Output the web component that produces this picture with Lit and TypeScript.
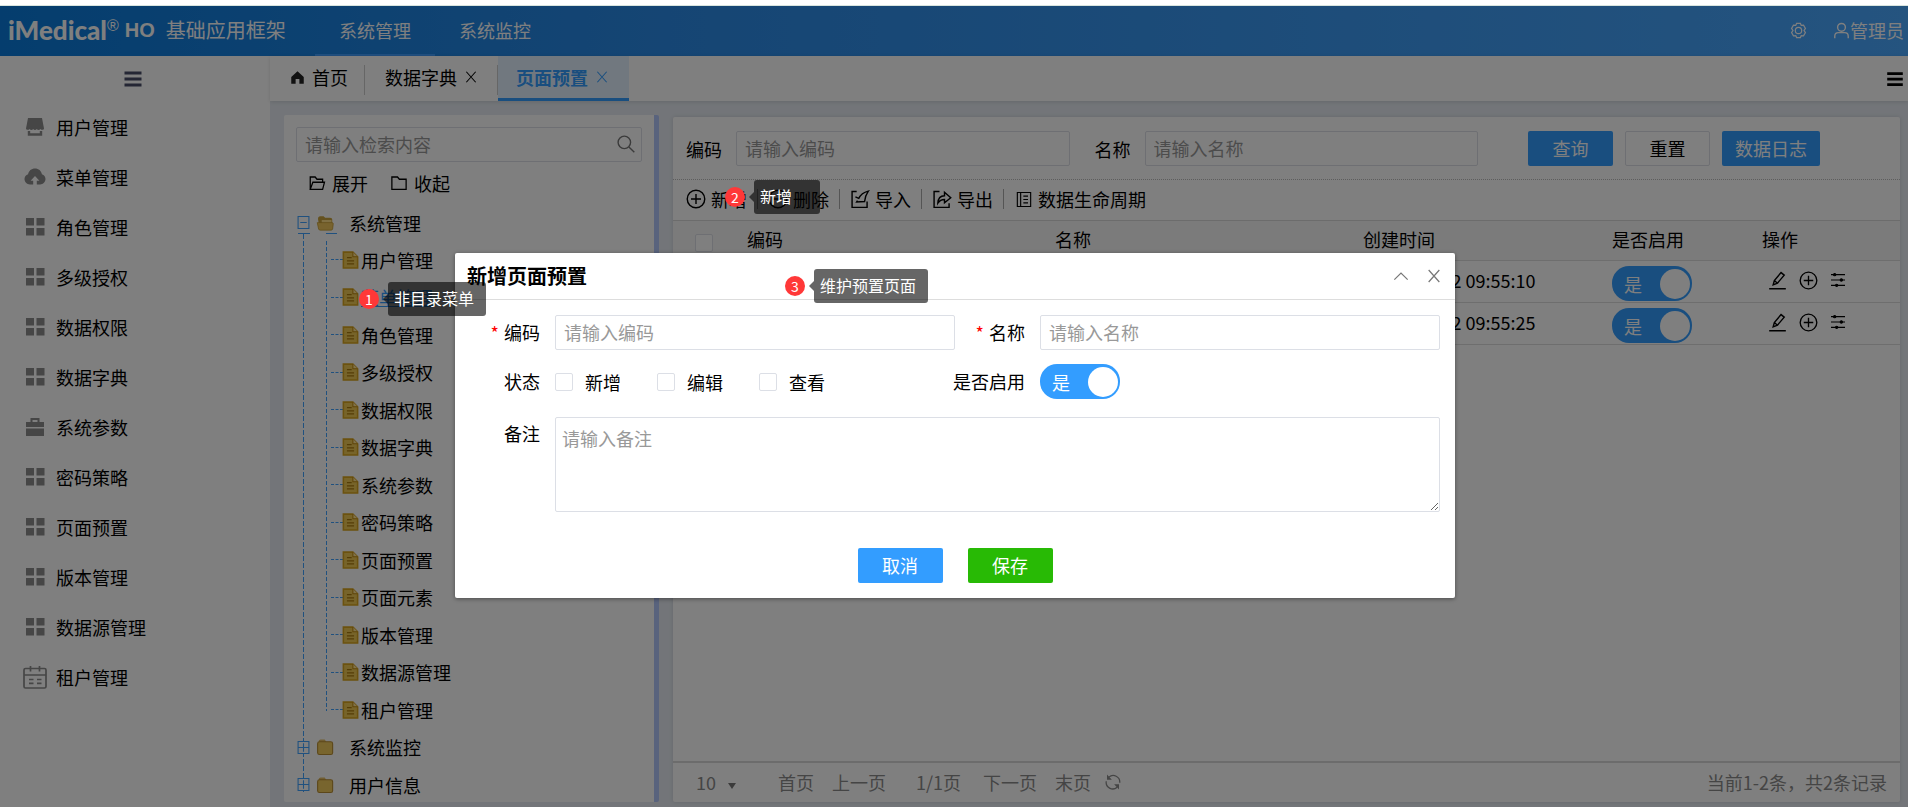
import { LitElement, html, svg, css, SVGTemplateResult } from "lit";
import { customElement } from "lit/decorators.js";
import { classMap } from "lit/directives/class-map.js";

const glyphs: Record<string, SVGTemplateResult> = {
  shop: svg`<path fill="currentColor" d="M5 3h14l2 10.500c0 1.500-2.600 1.700-3.600.4-1 1.300-2.700 1.300-3.600 0-1 1.300-2.700 1.300-3.600 0-1 1.300-2.700 1.300-3.600 0C5.600 15.200 3 15 3 13.500z"/><path d="M6 16v3.500h12V16" fill="none" stroke="currentColor" stroke-width="2.400"/>`,
  cloud: svg`<path fill="currentColor" d="M12 3.500c3.600 0 6.300 2.400 6.900 5.700 2.200.7 3.600 2.600 3.600 4.900 0 3-2.400 5.400-5.400 5.400h-3.300v-3.700h2.600L12 11l-4.400 4.800h2.600v3.700H6.900c-3 0-5.400-2.400-5.400-5.400 0-2.300 1.400-4.200 3.600-4.900C5.700 5.900 8.400 3.500 12 3.500z"/>`,
  grid: svg`<path fill="currentColor" d="M3 3h8v7.500H3zM13.500 3h8v7.500h-8zM3 13h8v7.500H3zM13.500 13h8v7.500h-8z"/>`,
  brief: svg`<path fill="currentColor" d="M3 7h18v5H3zM3 13.500h18V21H3z"/><path d="M8.500 7V4h7v3" fill="none" stroke="currentColor" stroke-width="2"/>`,
  calendar: svg`<g fill="none" stroke="currentColor" stroke-width="1.700"><rect x="1" y="3.500" width="22" height="19.500" rx="1.500"/><path d="M1 10h22M7.500 1v5.500M16.500 1v5.500M6 14.500h4.500M14 14.500h4.500M6 18.300h4.500M14 18.300h4.500"/></g>`,
  bars: svg`<path fill="currentColor" d="M3.500 4.500h17v3h-17zM3.500 10.500h17v3h-17zM3.500 16.500h17v3h-17z"/>`,
  home: svg`<path fill="currentColor" d="M12 2l10 9v11h-7v-7.500H9V22H2V11z"/>`,
  cross: svg`<path d="M4 3l16 18M20 3L4 21" fill="none" stroke="currentColor" stroke-width="1.800"/>`,
  up: svg`<path d="M2 17.500l10-10 10 10" fill="none" stroke="currentColor" stroke-width="1.800"/>`,
  search: svg`<g fill="none" stroke="currentColor" stroke-width="1.700"><circle cx="10" cy="10" r="7.500"/><path d="M15.500 15.500L22 22"/></g>`,
  folderOpen: svg`<path d="M3 20.500V4h6.500l2.500 3h7.500v4M3 20.500l3.500-9.500H22l-2.500 9.500z" fill="none" stroke="currentColor" stroke-width="1.700"/>`,
  folder: svg`<path d="M2.500 20.500V4H10l2.500 3h9v13.500z" fill="none" stroke="currentColor" stroke-width="1.700"/>`,
  gear: svg`<g fill="none" stroke="currentColor" stroke-width="1.700"><path d="M9.300 2h5.400l1.200 2.900 3.200-.3 2.700 4.500L19.800 12l2 2.900-2.700 4.500-3.200-.3-1.200 2.900H9.300l-1.200-2.900-3.200.3-2.700-4.500L4.200 12l-2-2.900 2.700-4.500 3.200.3z"/><circle cx="12" cy="12" r="4.500"/></g>`,
  person: svg`<g fill="none" stroke="currentColor" stroke-width="2"><circle cx="12" cy="7.500" r="5.500"/><path d="M2.500 23v-3c0-3 2-5 5-5h9c3 0 5 2 5 5v3"/></g>`,
  plus: svg`<g fill="none" stroke="currentColor" stroke-width="1.700"><circle cx="12" cy="12" r="10.500"/><path d="M12 6v12M6 12h12"/></g>`,
  minus: svg`<g fill="none" stroke="currentColor" stroke-width="1.700"><circle cx="12" cy="12" r="10.500"/><path d="M6 12h12"/></g>`,
  importing: svg`<path d="M8 3H2.500v19h18v-7M6.500 9.500l4 1.800C12.500 7 16 4 22 2.500c-2.500 3.500-4 7.500-4.500 12.500L8 15.500l1-1.500" fill="none" stroke="currentColor" stroke-width="1.700"/>`,
  exporting: svg`<path d="M9 3H2.500v19h18v-5M7 17c.3-6 3-9 8-9V4l7.500 6.500L15 16.500v-4c-4 0-6 1.300-8 4.500z" fill="none" stroke="currentColor" stroke-width="1.700"/>`,
  book: svg`<g fill="none" stroke="currentColor" stroke-width="1.700"><path d="M2 1.500h20v21H2zM7 1.500v21M11 7h7M11 12h7M11 17h7"/></g>`,
  pencil: svg`<path d="M1.500 22.500h21M6.500 17.500l1.500-5.500L16.500 2l4 3.300-8.500 10zM8 12l4 3.500" fill="none" stroke="currentColor" stroke-width="1.800"/>`,
  sliders: svg`<g stroke="currentColor" stroke-width="1.700" fill="currentColor"><path d="M1.500 4h21M1.500 12h21M1.500 20h21"/><circle cx="7" cy="4" r="1.700"/><circle cx="17" cy="12" r="1.700"/><circle cx="10" cy="20" r="1.700"/></g>`,
  refresh: svg`<g fill="none" stroke="currentColor" stroke-width="1.700"><path d="M6.500 5.500A8.800 8.800 0 0 1 21 13M17.500 19A8.800 8.800 0 0 1 3 11"/></g><path fill="currentColor" d="M4 2v7h6.500zM20 22v-7h-6.500z"/>`,
  yellowOpen: svg`<path fill="#c9a33e" d="M2 6.500c0-2 1-3.500 3-3.500h4.500l2 2H18c2 0 3 1 3 3v11H4z"/><path fill="#ffdf86" d="M7 8h13v8H7z"/><path fill="#f1c75c" d="M1 11.500h19.500c1.500 0 2 .7 1.800 2L21.500 20c-.2 1-1 1.500-2 1.500H5c-1.200 0-2-.5-2.200-1.500z" stroke="#c39a33"/>`,
  yellowShut: svg`<path fill="#e2bd66" d="M3 4.500C3 3 4 2 5.500 2H11l2.500 4H3z"/><rect x="1.500" y="5" width="20" height="17" rx="2.500" fill="#f0ca5c" stroke="#b98f35" stroke-width="1.500"/>`,
  sheet: svg`<path fill="#efc955" stroke="#d8a41e" stroke-width="2" d="M3 2h12l6 6v14H3z"/><path d="M15 2v6h6" fill="#ffe496" stroke="#c08a10" stroke-width="1.300"/><path d="M7.500 9h6M7.500 13h9M7.500 17h9" stroke="#a97a0c" stroke-width="1.600"/>`,
  open: svg`<g fill="none" stroke="#40a2ff" stroke-width="2"><path d="M2 1h20v22H2zM6 12h12"/></g>`,
  shut: svg`<g fill="none" stroke="#40a2ff" stroke-width="2"><path d="M2 1h20v22H2zM2 12h20M12 4v16"/></g>`,
};

const icon = (name: string, cls = "") =>
  html`<svg class="ico ${cls}" viewBox="0 0 24 24" aria-hidden="true">${glyphs[name]}</svg>`;

const menu: [string, string][] = [
  ["shop", "用户管理"],
  ["cloud", "菜单管理"],
  ["grid", "角色管理"],
  ["grid", "多级授权"],
  ["grid", "数据权限"],
  ["grid", "数据字典"],
  ["brief", "系统参数"],
  ["grid", "密码策略"],
  ["grid", "页面预置"],
  ["grid", "版本管理"],
  ["grid", "数据源管理"],
  ["calendar", "租户管理"],
];

const leaves = [
  "用户管理", "菜单管理", "角色管理", "多级授权", "数据权限", "数据字典", "系统参数",
  "密码策略", "页面预置", "页面元素", "版本管理", "数据源管理", "租户管理",
];

const rows = ["2022-12-12 09:55:10", "2022-12-12 09:55:25"];

const base = css`
  * { box-sizing: border-box; }
  :host {
    font-family: "Noto Sans CJK SC", "Noto Sans", sans-serif;
    font-size: 18px;
    line-height: 24px;
    color: #000;
  }
  .ico { width: 18px; height: 18px; flex: none; display: block; }
  button, input, textarea, select { font: inherit; color: inherit; margin: 0; }
  button { background: none; border: 0; padding: 0; white-space: nowrap; cursor: pointer; }
  a { color: inherit; text-decoration: none; }
  ul { list-style: none; margin: 0; padding: 0; }
  .box {
    height: 35px;
    border: 1px solid #dcdfe6;
    border-radius: 2px;
    padding: 0 8px 2px;
    background: #fff;
    min-width: 0;
    outline: none;
  }
  ::placeholder { color: #999; opacity: 1; }
  .tick {
    appearance: none;
    width: 18px;
    height: 18px;
    border: 1px solid #dcdfe6;
    border-radius: 2px;
    background: #fff;
    flex: none;
    display: block;
  }
  .btn { height: 35px; min-width: 85px; padding: 0 13px 1px; border-radius: 2px; background: #339dff; color: #fff; }
  .plain { background: #fff; color: #000; border: 1px solid #dcdfe6; }
  .green { background: #28ba05; }
`;

@customElement("state-switch")
export class StateSwitch extends LitElement {
  static properties = { label: {} };
  declare label: string;
  static styles = [base, css`
    :host { display: block; }
    .switch {
      display: flex;
      align-items: center;
      justify-content: space-between;
      width: 80px;
      height: 35px;
      border-radius: 17px;
      background: #339dff;
      color: #fff;
      padding: 0 2px 0 12px;
    }
    .knob { appearance: none; margin: 0; width: 30px; height: 30px; border-radius: 50%; background: #fff; }
  `];
  render() {
    return html`<label class="switch"><span>是</span><input class="knob" type="checkbox" role="switch" aria-label=${this.label} checked /></label>`;
  }
}

@customElement("top-bar")
export class TopBar extends LitElement {
  static styles = [base, css`
    :host { display: block; }
    .bar {
      display: flex;
      align-items: center;
      height: 50px;
      padding: 0 4px 2px 8px;
      color: #fff;
      background: linear-gradient(90deg, #0a7bdc, #2b8be8 35%, #4aa8ff);
    }
    .logo { display: flex; align-items: center; width: 307px; white-space: nowrap; }
    .brand { font: 900 26px/32px Lato, sans-serif; }
    .reg { font: 400 16px/24px "Liberation Sans", sans-serif; padding-bottom: 8px; }
    .ho { font: 700 20px/32px "Liberation Sans", sans-serif; padding: 0 11px 0 6px; }
    .name { font-size: 20px; }
    .nav { display: flex; flex: 1; align-self: stretch; }
    .nav a { width: 120px; height: 50px; line-height: 48px; text-align: center; border-bottom: 2px solid transparent; }
    .nav .on { border-color: #409eff; }
    .who { display: flex; align-items: center; gap: 26px; }
    .user { display: flex; align-items: center; }
    .who .ico { width: 17px; height: 17px; }
  `];
  render() {
    return html`<header class="bar">
      <div class="logo"><span class="brand">iMedical</span><span class="reg">®</span><span class="ho">HO</span><span class="name">基础应用框架</span></div>
      <nav class="nav"><a class="on" href="#system">系统管理</a><a href="#monitor">系统监控</a></nav>
      <div class="who"><button aria-label="设置">${icon("gear")}</button><button class="user">${icon("person")}管理员</button></div>
    </header>`;
  }
}

@customElement("side-menu")
export class SideMenu extends LitElement {
  static styles = [base, css`
    :host { display: block; width: 270px; flex: none; background: #fff; }
    .fold { display: flex; justify-content: center; align-items: center; width: 100%; height: 46px; padding-right: 4px; color: #484c68; }
    .fold .ico { width: 24px; height: 24px; }
    .item { display: flex; align-items: center; gap: 9px; height: 50px; padding-left: 23px; }
    .item .ico { width: 24px; height: 24px; color: #8c8c8c; }
  `];
  render() {
    return html`<button class="fold" aria-label="折叠菜单">${icon("bars")}</button>
      <ul>${menu.map(([i, t]) => html`<li><a class="item" href="#menu">${icon(i)}${t}</a></li>`)}</ul>`;
  }
}

@customElement("tab-strip")
export class TabStrip extends LitElement {
  static styles = [base, css`
    :host { display: block; }
    .strip { display: flex; height: 45px; background: #fff; box-shadow: 0 1px 4px rgba(0, 0, 0, 0.12); }
    .tab { display: flex; align-items: center; gap: 7px; padding: 0 20px; border-bottom: 3px solid transparent; }
    .tab:not(.on) { background: linear-gradient(#ccc, #ccc) right 9px / 1px 30px no-repeat; }
    .tab .ico { width: 14px; height: 14px; }
    .tab .home { width: 15px; height: 15px; color: #222; }
    .first { padding-right: 17px; }
    .on { color: #339dff; font-weight: 700; background: #e3f1ff; border-bottom-color: #339dff; padding-left: 18px; }
    .more { margin-left: auto; margin-right: 2px; }
    .more .ico { width: 22px; height: 22px; }
  `];
  render() {
    return html`<div class="strip">
      <div class="tab first">${icon("home", "home")}<span>首页</span></div>
      <div class="tab"><span>数据字典</span><button aria-label="关闭">${icon("cross")}</button></div>
      <div class="tab on"><span>页面预置</span><button aria-label="关闭">${icon("cross")}</button></div>
      <button class="more" aria-label="更多">${icon("bars")}</button>
    </div>`;
  }
}

@customElement("menu-tree")
export class MenuTree extends LitElement {
  static styles = [base, css`
    :host { display: block; width: 375px; flex: none; background: #fff; border-right: 5px solid #b3c6fb; border-radius: 2px; overflow: hidden; }
    .panel { padding: 12px 12px 0; }
    .find { display: flex; align-items: center; padding: 0 5px 1px 8px; }
    .find input { flex: 1; min-width: 0; border: 0; outline: 0; padding: 0; background: none; }
    .find .ico { width: 20px; height: 20px; color: #777; }
    .ops { display: flex; gap: 22px; padding-left: 12px; height: 42px; }
    .ops button { display: flex; align-items: center; gap: 6px; }
    .tree { background: repeating-linear-gradient(#40a2ff 0 5px, transparent 5px 7px) 7px 30px / 1px 560px no-repeat; }
    .node, .leaf { display: flex; align-items: center; height: 37px; }
    .node { padding-left: 1px; }
    .root {
      background:
        linear-gradient(#40a2ff, #40a2ff) 2px 29px / 12px 1px no-repeat,
        linear-gradient(#40a2ff, #40a2ff) 30px 29px / 11px 1px no-repeat;
    }
    .node .ico { width: 13px; height: 13px; background: #fff; }
    .node .dir { width: 21px; height: 18px; margin: 0 13px 0 5px; }
    .sub { margin-left: 30px; background: repeating-linear-gradient(#40a2ff 0 4px, transparent 4px 6px) 0 0 / 1px 470px no-repeat; }
    .leaf { gap: 1px; }
    .sub li:nth-child(even) .leaf, .shut .node { height: 38px; }
    .leaf .ico { width: 19px; height: 20px; }
    .dash { width: 12px; margin-left: 5px; margin-right: -3px; border-top: 1px dashed #40a2ff; }
    .hot { color: #339dff; text-decoration: underline; }
  `];
  render() {
    return html`<div class="panel">
      <label class="box find"><input type="text" aria-label="检索" placeholder="请输入检索内容" />${icon("search")}</label>
      <div class="ops"><button>${icon("folderOpen")}展开</button><button>${icon("folder")}收起</button></div>
      <ul class="tree">
        <li>
          <div class="node root">${icon("open")}${icon("yellowOpen", "dir")}系统管理</div>
          <ul class="sub">${leaves.map((t, i) => html`<li><a class="leaf" href="#node"><i class="dash"></i>${icon("sheet")}<span class=${classMap({ hot: i === 1 })}>${t}</span></a></li>`)}</ul>
        </li>
        <li class="shut"><div class="node">${icon("shut")}${icon("yellowShut", "dir")}系统监控</div></li>
        <li><div class="node">${icon("shut")}${icon("yellowShut", "dir")}用户信息</div></li>
      </ul>
    </div>`;
  }
}

@customElement("preset-list")
export class PresetList extends LitElement {
  static styles = [base, css`
    :host { display: flex; flex-direction: column; flex: 1; min-width: 0; background: #fff; border-radius: 2px; margin-top: 2px; box-shadow: 0 0 4px rgba(0, 0, 0, 0.12); }
    .filter { display: flex; align-items: center; padding: 14px 80px 13px 13px; border-bottom: 1px dotted #bbb; }
    .filter label { margin-right: 14px; flex: none; }
    .filter .box { flex: 1; margin-right: 25px; }
    .buttons { display: flex; gap: 12px; margin-left: 25px; }
    .tools { display: flex; align-items: center; height: 40px; padding: 0 0 2px 13px; }
    .tools button { display: flex; align-items: center; gap: 5px; padding-right: 10px; margin-right: 10px; border-right: 1px solid #aaa; height: 20px; }
    .tools button:last-child { border: 0; }
    .tools .ico { width: 20px; height: 20px; }
    .tools .book { width: 16px; height: 17px; margin: 0 1px 0 2px; }
    .grid { width: 100%; table-layout: fixed; border-collapse: collapse; border-top: 1px solid #d8d8d8; }
    th { font-weight: 400; text-align: left; background: #f6f6f6; height: 40px; padding: 0 12px 4px; }
    td { height: 42px; padding: 0 12px 3px; }
    th, td { border-bottom: 1px solid #ddd; }
    .pick { padding: 4px 0 0 22px; }
    .c0 { width: 62px; }
    .c3 { width: 249px; }
    .c4, .c5 { width: 150px; }
    .sw { padding: 4px 12px 0; }
    .when { white-space: nowrap; padding-left: 18px; }
    .acts { display: flex; align-items: center; gap: 12px; padding-left: 6px; }
    .acts .ico { width: 19px; height: 19px; }
    .acts .thin { width: 16px; height: 16px; }
    .foot { display: flex; align-items: center; margin-top: auto; height: 41px; padding: 0 13px 2px 19px; border-top: 2px solid #d8d8d8; color: #8a8a8a; }
    .size { appearance: none; border: 0; background: none; padding: 0 4px; width: 30px; outline: none; }
    .caret { border: 4px solid transparent; border-top: 6px solid #777; border-bottom: 0; margin: 8px 42px 0 6px; }
    .pages { display: flex; align-items: center; gap: 18px; }
    .now { padding: 0 4px 0 12px; }
    .total { margin-left: auto; }
    .re { margin-left: -5px; }
  `];
  render() {
    return html`<form class="filter">
        <label for="code">编码</label><input id="code" class="box" placeholder="请输入编码" />
        <label for="name">名称</label><input id="name" class="box" placeholder="请输入名称" />
        <div class="buttons"><button type="button" class="btn">查询</button><button type="button" class="btn plain">重置</button><button type="button" class="btn">数据日志</button></div>
      </form>
      <div class="tools">
        <button>${icon("plus")}新增</button><button>${icon("minus")}删除</button><button>${icon("importing")}导入</button><button>${icon("exporting")}导出</button><button>${icon("book", "book")}数据生命周期</button>
      </div>
      <table class="grid">
        <thead><tr>
          <th class="c0 pick"><input class="tick" type="checkbox" aria-label="全选" /></th>
          <th>编码</th><th>名称</th><th class="c3">创建时间</th><th class="c4">是否启用</th><th class="c5">操作</th>
        </tr></thead>
        <tbody>${rows.map((t) => html`<tr>
          <td class="pick"><input class="tick" type="checkbox" aria-label="选择" /></td>
          <td></td><td></td><td class="when">${t}</td>
          <td class="sw"><state-switch .label=${"是否启用"}></state-switch></td>
          <td><div class="acts"><button aria-label="编辑">${icon("pencil")}</button><button aria-label="新增">${icon("plus")}</button><button aria-label="配置">${icon("sliders", "thin")}</button></div></td>
        </tr>`)}</tbody>
      </table>
      <div class="foot">
        <select class="size" aria-label="每页条数"><option>10</option></select><i class="caret"></i>
        <div class="pages"><a href="#first">首页</a><a href="#prev">上一页</a><span class="now">1/1页</span><a href="#next">下一页</a><a href="#last">末页</a><button class="re" aria-label="刷新">${icon("refresh")}</button></div>
        <span class="total">当前1-2条，共2条记录</span>
      </div>`;
  }
}

@customElement("preset-dialog")
export class PresetDialog extends LitElement {
  static styles = [base, css`
    :host { display: block; width: 1000px; max-width: 100%; background: #fff; border-radius: 2px; box-shadow: 0 1px 4px rgba(0, 0, 0, 0.4); }
    .head { display: flex; align-items: center; gap: 17px; height: 47px; padding: 0 13px 0 12px; border-bottom: 1px solid #ddd; color: #777; }
    .title { margin: 0 auto 0 0; font-size: 20px; font-weight: 700; color: #000; }
    .head .ico { width: 16px; height: 16px; }
    .form { display: grid; grid-template-columns: 85px 1fr 55px 1fr; column-gap: 15px; row-gap: 14px; padding: 15px 15px 0 0; align-items: center; }
    .form > label, .lab { text-align: right; white-space: nowrap; justify-self: end; padding-bottom: 2px; }
    .form > .box { width: 100%; }
    .req::before { content: "*"; color: #f00; margin-right: 5px; }
    .checks { display: flex; }
    .checks label { display: flex; align-items: center; gap: 12px; width: 102px; }
    .area { grid-column: 2 / 5; height: 95px; margin-top: 4px; padding: 8px 6px; line-height: 24px; resize: vertical; display: block; }
    .top { align-self: start; padding-top: 8px; }
    .acts { display: flex; justify-content: center; gap: 25px; padding: 36px 0 15px; }
  `];
  render() {
    return html`<section role="dialog" aria-labelledby="t">
      <div class="head"><h2 class="title" id="t">新增页面预置</h2><button aria-label="收起">${icon("up")}</button><button aria-label="关闭">${icon("cross")}</button></div>
      <form class="form">
        <label class="req" for="dc">编码</label><input class="box" id="dc" placeholder="请输入编码" />
        <label class="req" for="dn">名称</label><input class="box" id="dn" placeholder="请输入名称" />
        <span class="lab">状态</span>
        <div class="checks">${["新增", "编辑", "查看"].map((t) => html`<label><input class="tick" type="checkbox" />${t}</label>`)}</div>
        <span class="lab">是否启用</span><state-switch .label=${"是否启用"}></state-switch>
        <label class="top" for="dm">备注</label><textarea class="box area" id="dm" placeholder="请输入备注"></textarea>
      </form>
      <div class="acts"><button class="btn">取消</button><button class="btn green">保存</button></div>
    </section>`;
  }
}

@customElement("app-root")
export class AppRoot extends LitElement {
  static styles = [base, css`
    :host { display: block; background: #fff; padding: 5px 5px 0 0; }
    .shell { position: relative; display: flex; flex-direction: column; height: calc(100vh - 5px); border-top: 1px solid #d9e5df; overflow: hidden; }
    .body { display: flex; flex: 1; min-height: 0; }
    .main { display: flex; flex-direction: column; flex: 1; min-width: 0; background: #e6ebf2; }
    .work { display: flex; flex: 1; min-height: 0; gap: 14px; padding: 14px 8px 5px 14px; }
    .mask { position: absolute; inset: 0; display: flex; justify-content: center; align-items: flex-start; padding: 247px 0 0 2px; background: rgba(0, 0, 0, 0.5); }
    .note { position: absolute; display: flex; align-items: center; font-size: 16px; color: #fff; }
    .num { width: 20px; height: 20px; border-radius: 50%; background: #ff3838; font-size: 14px; line-height: 20px; text-align: center; margin-right: 4px; }
    .arrow { border: 5px solid transparent; border-right-color: rgba(0, 0, 0, 0.6); border-left: 0; }
    .tip { height: 34px; line-height: 32px; min-width: 66px; padding: 0 12px 0 6px; border-radius: 3px; background: rgba(0, 0, 0, 0.6); white-space: nowrap; }
    .n1 { left: 359px; top: 276px; }
    .n2 { left: 725px; top: 174px; }
    .n3 { left: 785px; top: 263px; }
  `];
  render() {
    const note = (n: number, text: string) =>
      html`<div class="note n${n}"><span class="num">${n}</span><i class="arrow"></i><span class="tip">${text}</span></div>`;
    return html`<div class="shell">
      <top-bar></top-bar>
      <div class="body">
        <side-menu></side-menu>
        <div class="main">
          <tab-strip></tab-strip>
          <div class="work"><menu-tree></menu-tree><preset-list></preset-list></div>
        </div>
      </div>
      <div class="mask"><preset-dialog></preset-dialog></div>
      ${note(1, "非目录菜单")}${note(2, "新增")}${note(3, "维护预置页面")}
    </div>`;
  }
}
